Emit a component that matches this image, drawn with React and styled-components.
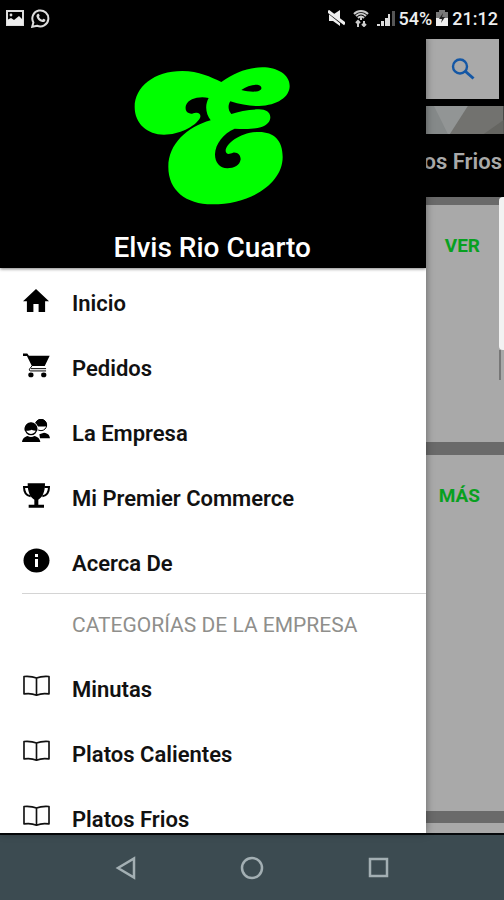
import React from "react";
import styled, { createGlobalStyle } from "styled-components";

const GlobalStyle = createGlobalStyle`
    * {
        box-sizing: border-box;
    }
    body {
        margin: 0;
        background-color: #000;
        font-family: Roboto, "Liberation Sans", sans-serif;
    }
    h1, h2, ul {
        margin: 0;
        padding: 0;
    }
`

const GalleryIcon = () => (
    <svg width="18" height="16" viewBox="0 0 18 16">
        <rect x="1" y="1" width="16" height="14" fill="none" stroke="#ddd" strokeWidth="2" />
        <circle cx="5" cy="5" r="1.4" fill="#ddd" />
        <path d="M1 15v-5l4-2 3 2 5-4 4 4v5z" fill="#eee" />
    </svg>
)

const WhatsappIcon = () => (
    <svg width="20" height="19" viewBox="0 0 20 19">
        <path d="M1.2 17.8l1.2-4.4A8 8 0 1 1 6 16.7z" fill="none" stroke="#ddd" strokeWidth="2" />
        <path d="M6.6 5c.9-.6 1.5-.1 2 1.4.2.8-.9 1.1-.6 1.7.7 1.3 1.700 2.2 3 2.7.6.2.9-1.2 1.6-1 1.6.7 2 .9 1.7 1.7-.5 1.3-1.7 1.7-3 1.4C8.200 12.200 6 10 5.500 7.400c-.1-1 .3-1.900 1.100-2.400z" fill="#ddd" />
    </svg>
)

const MuteIcon = () => (
    <svg width="17" height="16" viewBox="0 0 17 16">
        <path d="M1 4h5l6-4v16l-7-5H1z" fill="#eee" />
        <path d="M1 3l16 13" stroke="#000" strokeWidth="2" />
        <path d="M0 1l17 13" stroke="#eee" strokeWidth="3" />
    </svg>
)

const WifiIcon = () => (
    <svg width="16" height="17" viewBox="0 0 16 17" fill="none" stroke="#ccc">
        <path d="M1 4C5 0 11 0 15 4M3 6c3-3 7-3 10 0M5 8c2-2 4-2 6 0" strokeWidth="2" />
        <path d="M8 7v3" strokeWidth="2" />
        <path d="M5 17v-6M3 13l2-2 2 2M11 11v6M9 14l2 2 2-2" strokeWidth="2" />
    </svg>
)

const SignalIcon = () => (
    <svg width="18" height="16" viewBox="0 0 18 16">
        <path d="M0 16v-2h3v2zM4 16v-5h3v5zM8 16V8h3v8z" fill="#ddd" />
        <path d="M11 16V4h2v12z" fill="#ddd" />
        <path d="M15 16V1h3v15z" fill="#555" />
    </svg>
)

const BatteryIcon = () => (
    <svg width="12" height="16" viewBox="0 0 12 16">
        <path d="M3 0h6v2h3v14H0V2h3z" fill="#777" />
        <path d="M0 8h12v8H0z" fill="#eee" />
        <path d="M7 3L3 9h3l-1 4 4-6H6z" fill="#222" />
    </svg>
)

const Logo = () => (
    <svg width="156" height="138" viewBox="40 35 468 414" role="img" aria-label="Elvis">
        <path
            fill="#00ff00"
            fillRule="evenodd"
            d="M302 80C270 65 235 47 185 47C100 47 42 95 42 155C42 205 80 238 130 238C175 238 222 215 238 188C242 178 236 171 226 172C218 173 213 177 206 174C195 170 193 160 196 150C203 130 235 122 264 128C252 150 255 175 270 195C200 215 143 265 143 335C143 405 195 447 275 447C390 447 486 385 486 305C486 255 460 230 415 230C360 230 315 265 315 288C318 300 328 295 337 292C352 290 360 300 360 312C358 330 340 339 320 339C297 339 283 322 283 297C284 265 308 235 342 220C370 222 400 222 420 216C440 210 449 198 449 186C449 170 435 162 415 162C385 162 355 168 332 176C322 165 321 150 329 138C360 148 385 152 415 152C470 150 507 125 507 92C507 58 470 36 425 36C380 36 340 52 302 80ZM362 104C375 94 395 87 410 88C422 90 425 98 420 103C412 112 385 110 362 104Z"
        />
    </svg>
)

const HomeIcon = () => (
    <svg width="26" height="23" viewBox="2 3 20 17" preserveAspectRatio="none">
        <path d="M10 20v-6h4v6h5v-8h3L12 3 2 12h3v8z" />
    </svg>
)

const CartIcon = () => (
    <svg width="27" height="25" viewBox="68 232 82 75">
        <path d="M68 233h13l5 7h63l-15 31H95L80 241H68z" />
        <path d="M96 270l-8 10c-2 4 0 6 4 6h46M92 279h46" fill="none" stroke="#000" strokeWidth="3" />
        <ellipse cx="92" cy="298" rx="8" ry="7" />
        <ellipse cx="131" cy="298" rx="8" ry="7" />
    </svg>
)

const PeopleIcon = () => (
    <svg width="28" height="23" viewBox="69 430 84 69">
        <circle cx="126" cy="448" r="17" fill="#fff" stroke="#000" strokeWidth="3" />
        <path d="M108 452c-2-29 37-29 36 0-12 1-24 1-36 0zM121 476l14-5c12 2 17 7 18 17h-30z" />
        <circle cx="96" cy="460" r="22" fill="#fff" />
        <circle cx="96" cy="460" r="17" fill="#fff" stroke="#000" strokeWidth="4" />
        <path d="M77 465c-3-34 41-34 38 0-8 0-13-1-17-3-5 3-13 4-21 3z" />
        <path d="M69 499c2-12 9-16 17-18 6 4 14 4 20 0 9 2 16 6 18 18z" />
    </svg>
)

const TrophyIcon = () => (
    <svg width="27" height="25" viewBox="68 51 81 75">
        <path d="M82 52h52c0 26-7 42-20 49v15h17v9H85v-9h17v-15C89 94 82 78 82 52z" />
        <path d="M84 63H71c0 17 8 26 20 28M132 63h14c0 17-8 26-20 28" fill="none" stroke="#000" strokeWidth="6" />
    </svg>
)

const InfoIcon = () => (
    <svg width="27" height="25" viewBox="0 0 27 25">
        <ellipse cx="13.5" cy="12.5" rx="13" ry="12" />
        <path d="M12 6h3v3h-3zM12 11h3v8h-3z" fill="#fff" />
    </svg>
)

const BookIcon = () => (
    <svg width="27" height="22" viewBox="67 43 82 66" fill="none" stroke="#111" strokeWidth="5" strokeLinejoin="round">
        <path d="M108 52c-11-5-25-6-38-5v53c13-2 27-1 38 4 11-5 25-6 38-4V47c-13-1-27 0-38 5zM108 52v52" />
    </svg>
)

const SearchIcon = () => (
    <svg width="24" height="22" viewBox="0 0 24 22" fill="none" stroke="#1457a5">
        <circle cx="9" cy="8.5" r="7" strokeWidth="2.4" />
        <path d="M14 13l8.5 7.5" strokeWidth="3" />
    </svg>
)

const menu = [
    { name: "Inicio", icon: <HomeIcon /> },
    { name: "Pedidos", icon: <CartIcon /> },
    { name: "La Empresa", icon: <PeopleIcon /> },
    { name: "Mi Premier Commerce", icon: <TrophyIcon /> },
    { name: "Acerca De", icon: <InfoIcon /> },
]

const categories = ["Minutas", "Platos Calientes", "Platos Frios"]

const MenuItem = ({ icon, name }) => {
    return (
        <li>
            <MenuLink href="#">
                <IconBox>{icon}</IconBox>
                {name}
            </MenuLink>
        </li>
    )
}

const App = () => {
    return (
        <>
            <GlobalStyle />
            <Screen>
                <StatusBar>
                    <StatusGroup $gap={7}>
                        <GalleryIcon />
                        <WhatsappIcon />
                    </StatusGroup>
                    <StatusGroup $gap={4}>
                        <StatusIcons>
                            <MuteIcon />
                            <WifiIcon />
                            <SignalIcon />
                        </StatusIcons>
                        <span>54%</span>
                        <BatteryIcon />
                        <span>21:12</span>
                    </StatusGroup>
                </StatusBar>

                <Content>
                    <Drawer>
                        <DrawerHeader>
                            <Logo />
                            <Title>Elvis Rio Cuarto</Title>
                        </DrawerHeader>
                        <nav>
                            <MenuList>
                                {menu.map((m) => (
                                    <MenuItem key={m.name} icon={m.icon} name={m.name} />
                                ))}
                            </MenuList>
                            <Divider />
                            <SectionTitle>CATEGORÍAS DE LA EMPRESA</SectionTitle>
                            <MenuList>
                                {categories.map((c) => (
                                    <MenuItem key={c} icon={<BookIcon />} name={c} />
                                ))}
                            </MenuList>
                        </nav>
                    </Drawer>

                    <Page>
                        <SearchBtn aria-label="Buscar">
                            <SearchIcon />
                        </SearchBtn>
                        <Banner viewBox="0 0 78 28" preserveAspectRatio="none">
                            <rect width="78" height="28" fill="#72726f" />
                            <path d="M0 0h42L24 28H0z" fill="#929595" />
                            <path d="M0 0h8l14 28H0z" fill="#858989" />
                            <path d="M78 14L58 28h20z" fill="#656561" />
                        </Banner>
                        <Tab>os Frios</Tab>
                        <Card $height={237} $gap={8}>
                            <CardBtn>VER</CardBtn>
                        </Card>
                        <Card $height={356} $gap={13}>
                            <CardBtn>MÁS</CardBtn>
                        </Card>
                        <Card $height={10} $gap={12} />
                        <EdgeHandle />
                    </Page>
                </Content>

                <NavBar>
                    <NavBtn aria-label="Atrás">
                        <svg width="22" height="24" viewBox="0 0 22 24">
                            <path d="M19 2.5v19L3 12z" />
                        </svg>
                    </NavBtn>
                    <NavBtn aria-label="Inicio">
                        <svg width="24" height="24" viewBox="0 0 24 24">
                            <circle cx="12" cy="12" r="10" />
                        </svg>
                    </NavBtn>
                    <NavBtn aria-label="Recientes">
                        <svg width="22" height="22" viewBox="0 0 22 22">
                            <rect x="3" y="2" width="17" height="17" />
                        </svg>
                    </NavBtn>
                </NavBar>
            </Screen>
        </>
    )
}

export default App;

const Screen = styled.div`
    display: flex;
    flex-direction: column;
    height: 100vh;
    overflow: hidden;
`

const StatusBar = styled.header`
    display: flex;
    flex-shrink: 0;
    justify-content: space-between;
    align-items: center;
    height: 36px;
    padding: 0 6px;
    color: #eee;
    font-size: 18px;
    font-weight: 500;
    background-color: #000;
`

const StatusGroup = styled.div`
    display: flex;
    align-items: center;
    gap: ${({ $gap }) => $gap}px;
`

const StatusIcons = styled.div`
    display: flex;
    gap: 8px;
`

const Content = styled.div`
    display: flex;
    flex: 1;
    min-height: 0;
    border-bottom: 2px solid #05080a;
`

const Drawer = styled.aside`
    z-index: 1;
    width: 84.6%;
    overflow: hidden;
    background-color: #fff;
    box-shadow: 0 0 8px rgba(0, 0, 0, 0.4);
`

const DrawerHeader = styled.div`
    display: flex;
    flex-direction: column;
    align-items: center;
    height: 232px;
    padding: 31px 2px 0 0;
    background-color: #000;
    box-shadow: 0 1px 3px rgba(0, 0, 0, 0.5);
`

const Title = styled.h1`
    margin-top: 27px;
    color: #fff;
    font-size: 28px;
    font-weight: 500;
    line-height: 32px;
`

const MenuList = styled.ul`
    list-style: none;
`

const MenuLink = styled.a`
    display: flex;
    align-items: center;
    gap: 22px;
    height: 65px;
    padding: 5px 22px 0;
    color: #111;
    font-size: 22px;
    font-weight: 600;
    text-decoration: none;
    white-space: nowrap;
`

const IconBox = styled.span`
    display: flex;
    justify-content: center;
    align-items: center;
    width: 28px;
    height: 28px;
    margin-bottom: 6px;

    svg {
        flex-shrink: 0;
    }
`

const Divider = styled.hr`
    height: 1px;
    margin: 0 0 0 22px;
    border: 0;
    background-color: #d4d4d4;
`

const SectionTitle = styled.h2`
    padding: 2px 0 0 72px;
    color: #8f8f8c;
    font-size: 21px;
    font-weight: 400;
    line-height: 58px;
    white-space: nowrap;
`

const Page = styled.main`
    position: relative;
    flex: 1;
    min-width: 0;
    padding-top: 3px;
    overflow: hidden;
    background-color: #000;
`

const SearchBtn = styled.button`
    display: flex;
    justify-content: center;
    align-items: center;
    width: calc(100% - 5px);
    height: 60px;
    margin-bottom: 7px;
    padding: 0;
    border: 0;
    background-color: #a9a9a9;
`

const Banner = styled.svg`
    display: block;
    width: 100%;
    height: 28px;
`

const Tab = styled.div`
    display: flex;
    justify-content: flex-end;
    height: 63px;
    padding-right: 2px;
    color: #a9a9a9;
    font-size: 22px;
    font-weight: 600;
    line-height: 56px;
    white-space: nowrap;
`

const Card = styled.section`
    display: flex;
    justify-content: flex-end;
    align-items: flex-start;
    height: ${({ $height, $gap }) => $height + $gap}px;
    padding: 28px 24px 0 0;
    border-top: ${({ $gap }) => $gap}px solid #6a6a6a;
    background-color: #a9a9a9;
`

const CardBtn = styled.button`
    padding: 0;
    border: 0;
    color: #08a020;
    font-family: inherit;
    font-size: 19px;
    font-weight: 700;
    line-height: 26px;
    background: none;
`

const EdgeHandle = styled.div`
    position: absolute;
    top: 161px;
    right: 0;
    width: 5px;
    height: 153px;
    border-radius: 4px 0 0 4px;
    background-color: #f2f2f2;

    &::after {
        content: "";
        position: absolute;
        top: 100%;
        right: 3px;
        width: 2px;
        height: 30px;
        background-color: #777;
    }
`

const NavBar = styled.footer`
    display: flex;
    flex-shrink: 0;
    justify-content: center;
    height: 65px;
    background-color: #3c4b51;
`

const NavBtn = styled.button`
    display: flex;
    justify-content: center;
    align-items: center;
    width: 25%;
    padding: 0;
    border: 0;
    background: none;

    svg {
        fill: none;
        stroke: #a3afb3;
        stroke-width: 2.5;
    }
`
